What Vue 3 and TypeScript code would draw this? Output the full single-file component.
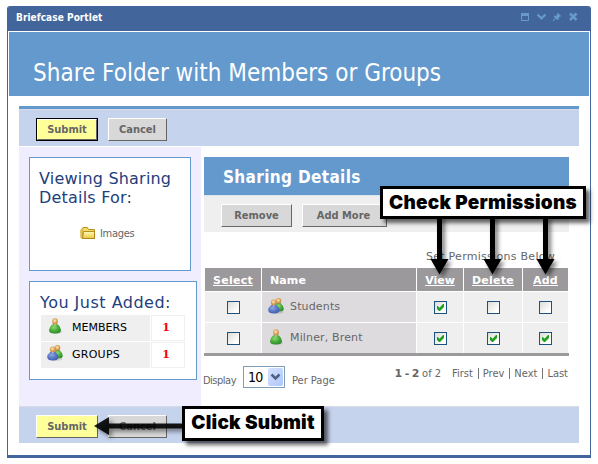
<script setup lang="ts">
import { ref } from 'vue'

interface Row {
  name: string
  icon: string
  perms: boolean[]
}

const rows = ref<Row[]>([
  { name: 'Students', icon: '#group', perms: [true, false, false] },
  { name: 'Milner, Brent', icon: '#member', perms: [true, true, true] },
])
const columns = ['View', 'Delete', 'Add']
const added = [
  { label: 'MEMBERS', icon: '#member', count: 1 },
  { label: 'GROUPS', icon: '#group', count: 1 },
]
const pages = ['First', 'Prev', 'Next', 'Last']
</script>

<template>
  <svg class="defs" width="0" height="0">
    <defs>
      <radialGradient id="gGreen" cx=".4" cy=".35" r=".7">
        <stop offset="0" stop-color="#8edb72" />
        <stop offset=".55" stop-color="#46aa38" />
        <stop offset="1" stop-color="#2b8a2b" />
      </radialGradient>
      <radialGradient id="gBlue" cx=".4" cy=".35" r=".7">
        <stop offset="0" stop-color="#8fa8e2" />
        <stop offset=".55" stop-color="#5977c4" />
        <stop offset="1" stop-color="#3f5bab" />
      </radialGradient>
      <radialGradient id="gHead" cx=".45" cy=".4" r=".6">
        <stop offset="0" stop-color="#ffedc4" />
        <stop offset=".6" stop-color="#dba45a" />
        <stop offset="1" stop-color="#bd843f" />
      </radialGradient>
      <linearGradient id="gFolder" x2="0" y2="1">
        <stop offset="0" stop-color="#fff9b8" />
        <stop offset="1" stop-color="#ecc840" />
      </linearGradient>
      <symbol id="member" viewBox="0 0 16 16">
        <ellipse cx="8.500" cy="14" rx="6.500" ry="1.900" fill="#000" opacity=".13" />
        <path d="M5 6.500Q8 5.500 11 6.500Q14 9.500 14 12Q14 15.500 8 15.500Q2 15.500 2 12Q2 9.500 5 6.500Z" fill="url(#gGreen)" />
        <ellipse cx="8" cy="3.400" rx="2.800" ry="3.200" fill="url(#gHead)" />
        <path d="M7 6.500h2.200l-1.200 1.500z" fill="#e3f4d9" opacity=".8" />
      </symbol>
      <symbol id="group" viewBox="0 0 16 16">
        <ellipse cx="9" cy="14" rx="6.500" ry="1.800" fill="#000" opacity=".13" />
        <path d="M8.500 5h4Q15.800 8 15.800 11Q15.500 13.500 11 13.500Q7 13 7 10Z" fill="url(#gGreen)" />
        <ellipse cx="10.500" cy="2.900" rx="2.800" ry="2.800" fill="url(#gHead)" />
        <path d="M3.200 7h5Q11.500 9.500 11.500 12Q11.500 15.500 5.800 15.500Q.2 15.500 .2 12Q.2 9.500 3.200 7Z" fill="url(#gBlue)" />
        <ellipse cx="5.700" cy="4.400" rx="2.800" ry="2.900" fill="url(#gHead)" />
        <path d="M4.800 7.200h2l-1 1.200z" fill="#dde5fa" opacity=".8" />
      </symbol>
    </defs>
  </svg>

  <div class="window">
    <div class="titlebar">
      <span class="title">Briefcase Portlet</span>
      <svg class="controls" width="58" height="10" viewBox="0 0 58 10" fill="none">
        <path d="M.5 1v7.500h7v-7.500" stroke="#6699cc" />
        <path d="M0 1h8v3h-8z" fill="#6699cc" />
        <path d="M16.500 2.500l4 3.800 4-3.800" stroke="#6699cc" stroke-width="2.400" />
        <path d="M36.800 .8l3.300 3.300-1 .6-1 .3-.5 2.500-1 .7-1.600-1.700-2.500 2.500h-.7v-.7l2.300-2.300-1.500-1.600 1-.7 2.200-.3.300-1.300z" fill="#6699cc" />
        <path d="M49 1.500l6.500 6.500M55.500 1.500l-6.500 6.500" stroke="#6699cc" stroke-width="2.600" />
      </svg>
    </div>

    <div class="body">
      <h1>Share Folder with Members or Groups</h1>

      <div class="panel">
        <div class="bar top">
          <button class="btn submit focused">Submit</button>
          <button class="btn cancel">Cancel</button>
        </div>

        <div class="columns">
          <div class="side">
            <div class="card viewing">
              <h2>Viewing Sharing<br />Details For:</h2>
              <div class="folder">
                <svg width="16" height="14" viewBox="0 0 16 14">
                  <path d="M2 12.500h12.500V3.500H8.500l-1.200-2H3l-1 1.500z" fill="#f4da66" stroke="#b58e18" />
                  <path d="M1 12L.7 4.500 1.500 3" fill="none" stroke="#d6b23c" />
                  <path d="M3.500 5.500h11v7h-12z" fill="url(#gFolder)" stroke="#a98214" stroke-width=".9" />
                </svg>
                <span>Images</span>
              </div>
            </div>

            <div class="card added">
              <h2>You Just Added:</h2>
              <div v-for="a in added" :key="a.label" class="count-row">
                <div class="count-label">
                  <svg width="16" height="16"><use :href="a.icon" /></svg>
                  <span :class="a.label.toLowerCase()">{{ a.label }}</span>
                </div>
                <div class="count">{{ a.count }}</div>
              </div>
            </div>
          </div>

          <div class="main">
            <div class="details-head">Sharing Details</div>
            <div class="toolbar">
              <button class="btn remove">Remove</button>
              <button class="btn more">Add More</button>
            </div>
            <div class="hint">Set Permissions Below</div>

            <div class="grid">
              <div class="th center"><u class="wide">Select</u></div>
              <div class="th name">Name</div>
              <div v-for="c in columns" :key="c" class="th center"><u :class="{ wide: c !== 'View' }">{{ c }}</u></div>
              <template v-for="r in rows" :key="r.name">
                <div class="td center"><span class="check"></span></div>
                <div class="td who">
                  <svg width="16" height="16"><use :href="r.icon" /></svg>
                  <span>{{ r.name }}</span>
                </div>
                <div v-for="(p, i) in r.perms" :key="i" class="td center">
                  <span class="check">
                    <svg v-if="p" width="11" height="11" viewBox="0 0 11 11">
                      <path d="M2 4v3l2 2h1l4-4V2h-1L4.500 5.700 2.800 4z" fill="#21a121" />
                    </svg>
                  </span>
                </div>
              </template>
            </div>

            <div class="pager">
              <span class="display">Display</span>
              <div class="select">
                <span>10</span>
                <i><svg width="15" height="18" viewBox="0 0 15 18"><path d="M3.500 6.500l4 4 4-4" fill="none" stroke="#4d6185" stroke-width="2.500" /></svg></i>
              </div>
              <span class="per">Per Page</span>
              <div class="pages">
                <span class="range"><b>1 - 2</b> of 2</span>
                <template v-for="(p, i) in pages" :key="p">
                  <span v-if="i" class="sep"></span>
                  <span>{{ p }}</span>
                </template>
              </div>
            </div>
          </div>
        </div>

        <div class="bar bottom">
          <button class="btn submit">Submit</button>
          <button class="btn cancel">Cancel</button>
        </div>
      </div>
    </div>
  </div>

  <svg class="arrows" width="598" height="464" viewBox="0 0 598 464">
    <g class="shadowed">
      <path v-for="x in [439.5, 492.5, 545.5]" :key="x" :transform="`translate(${x} 0)`" d="M-2.500 216h5v43h6.500l-9 15.500-9-15.500h6.500z" fill="#000" />
    </g>
    <path class="shadowed" d="M184 423.500h-75v-6.500l-15 9 15 9v-6.500h75z" fill="#000" fill-opacity=".9" />
  </svg>
  <div class="callout permissions">Check Permissions</div>
  <div class="callout click">Click Submit</div>
</template>

<style>
body {
  background: #fff;
  overflow: hidden;
}
</style>

<style scoped>
* {
  box-sizing: border-box;
}
.defs {
  position: absolute;
}
.window {
  width: 584px;
  height: 452px;
  margin: 6px 0 0 7px;
  border: 1px solid #42659b;
  border-width: 0 1px 3px;
  border-radius: 3px 3px 0 0;
  color: #666;
  font: 11px/14px "DejaVu Sans Condensed", Tahoma, sans-serif;
  white-space: nowrap;
}
.titlebar {
  display: flex;
  justify-content: space-between;
  height: 25px;
  padding: 0 11px 0 8px;
  background: #42659b;
  border-radius: 2px 2px 0 0;
}
.title {
  color: #fff;
  font-size: 10px;
  font-weight: bold;
  line-height: 23px;
  letter-spacing: 0.06px;
}
.controls {
  margin-top: 6px;
}
.body {
  padding: 1px;
}
h1 {
  height: 64px;
  margin: 0 0 10px;
  padding-left: 24px;
  background: #6399cd;
  color: #fff;
  font-size: 24px;
  font-weight: normal;
  line-height: 82px;
}
.panel {
  margin: 0 10px;
}
.bar {
  display: flex;
  gap: 10px;
  height: 37px;
  padding: 8px 0 0 17px;
  border-top: 1px solid #d8dae6;
  background: #c6d3ed;
}
.bar.top {
  height: 40px;
  border-top: 3px solid #6399cd;
  padding-top: 9px;
  box-shadow: inset 0 1px #d8dce8;
}
.btn {
  height: 23px;
  padding: 0;
  border: 1px solid;
  border-color: #fff #666 #666 #fff;
  background: #d8d8d8;
  color: #666;
  font: bold 11px/20px "DejaVu Sans Condensed", Verdana, sans-serif;
  text-align: center;
}
.submit {
  width: 62px;
  background: #ffff99;
}
.focused {
  outline: 1px solid #000;
  outline-offset: -1px;
  border-width: 2px;
  line-height: 18px;
}
.cancel {
  width: 59px;
}
.remove {
  width: 71px;
}
.more {
  width: 85px;
  padding-right: 2px;
}
.columns {
  display: flex;
  height: 260px;
}
.side {
  width: 182px;
  margin-top: 1px;
  padding: 10px 4px 0 10px;
  background: #f0eefe;
}
.card {
  border: 1px solid #6399cd;
  background: #fff;
}
.viewing {
  width: 162px;
  height: 114px;
  margin-bottom: 10px;
  padding: 11px 0 0 9px;
}
.added {
  width: 168px;
  height: 99px;
  padding: 11px 0 0 11px;
}
h2 {
  margin: 0;
  color: #233e7c;
  font: 16px/19px "DejaVu Sans", Verdana, sans-serif;
  letter-spacing: 0.2px;
}
.added h2 {
  margin: 0 0 3px -1px;
  letter-spacing: 0.49px;
}
.folder {
  display: flex;
  gap: 4px;
  margin: 19px 0 0 41px;
  letter-spacing: -0.3px;
}
.folder span {
  line-height: 16px;
}
.count-row {
  display: flex;
  gap: 1px;
  margin-bottom: 1px;
}
.count-label {
  display: flex;
  width: 109px;
  height: 26px;
  padding: 3px 0 0 6px;
  gap: 9px;
  background: #efefef;
  color: #000;
  font: 11px/19px "DejaVu Sans", Verdana, sans-serif;
}
.groups {
  letter-spacing: 0.25px;
}
.count {
  width: 34px;
  border: 1px solid #efefef;
  color: #f00;
  font: bold 11px/24px "DejaVu Serif", serif;
  padding-right: 4px;
  text-align: center;
}
.main {
  width: 365px;
  margin: 11px 0 0 3px;
}
.details-head {
  height: 38px;
  padding-left: 19px;
  background: #6399cd;
  color: #fff;
  font-size: 17px;
  font-weight: bold;
  line-height: 40px;
  letter-spacing: 0.35px;
}
.toolbar {
  display: flex;
  gap: 10px;
  height: 37px;
  padding: 8px 0 0 17px;
  border-top: 1px solid #dfe3ea;
  background: #efefef;
}
.hint {
  height: 36px;
  padding-right: 14px;
  font: 11px/50px "DejaVu Sans", Verdana, sans-serif;
  letter-spacing: 0.28px;
  text-align: right;
}
.grid {
  display: grid;
  grid-template: 23px 30px 30px / 56px 154px 46px 58px 45px;
  gap: 1px;
  padding: 0 1px;
  border-bottom: 3px solid #9c9a9c;
  font-family: "DejaVu Sans", Verdana, sans-serif;
}
.th {
  background: #9c999c;
  color: #fff;
  font-weight: bold;
  line-height: 25px;
}
.th.name {
  padding-left: 8px;
  letter-spacing: 0.1px;
}
.wide {
  letter-spacing: 0.25px;
}
.center {
  text-align: center;
}
.td {
  background: #efefef;
  line-height: 30px;
}
.td.center {
  display: flex;
  justify-content: center;
  padding-top: 9px;
}
.td.who {
  display: flex;
  gap: 6px;
  padding: 0 0 0 6px;
  background: #dedbde;
  letter-spacing: 0.15px;
}
.who svg {
  margin-top: 6px;
}
.check {
  width: 13px;
  height: 13px;
  border: 1px solid #1c5180;
  background: linear-gradient(135deg, #dcdcd7, #fff 80%);
  line-height: 0;
}
.pager {
  display: flex;
  height: 50px;
  padding-top: 10px;
}
.display {
  width: 39px;
  margin-left: -1px;
  line-height: 29px;
  letter-spacing: -0.5px;
}
.select {
  display: flex;
  justify-content: space-between;
  width: 42px;
  height: 22px;
  margin-left: 1px;
  padding: 1px 1px 1px 4px;
  border: 1px solid #7f9db9;
  color: #000;
  font-size: 14px;
  line-height: 18px;
  letter-spacing: -0.8px;
}
.select i {
  display: block;
  width: 15px;
  height: 18px;
  border-radius: 2px;
  background: linear-gradient(135deg, #d5e2ff, #aec6f8);
}
.per {
  margin-left: 7px;
  line-height: 29px;
}
.pages {
  display: flex;
  margin: -1px 1px 0 auto;
  line-height: 18px;
}
.range {
  margin-right: 11px;
}
.range b {
  font-family: "DejaVu Sans", Verdana, sans-serif;
  letter-spacing: -0.6px;
}
.sep {
  width: 1px;
  height: 11px;
  margin: 3px 4px 0 5px;
  background: #777;
}
.arrows {
  position: absolute;
  left: 0;
  top: 0;
}
.shadowed {
  filter: drop-shadow(3px 3px 2px rgba(0, 0, 0, 0.5));
}
.callout {
  position: absolute;
  border: 3px solid #000;
  background: #fff;
  box-shadow: 4px 4px 4px rgba(0, 0, 0, 0.6);
  color: #000;
  font: 900 19px/27px Inter, "Arial Black", sans-serif;
  letter-spacing: 0.24px;
  text-align: center;
  white-space: nowrap;
}
.permissions {
  left: 380px;
  top: 186px;
  width: 206px;
  height: 33px;
}
.click {
  left: 182px;
  top: 406px;
  width: 142px;
  height: 35px;
  line-height: 28px;
}
</style>
